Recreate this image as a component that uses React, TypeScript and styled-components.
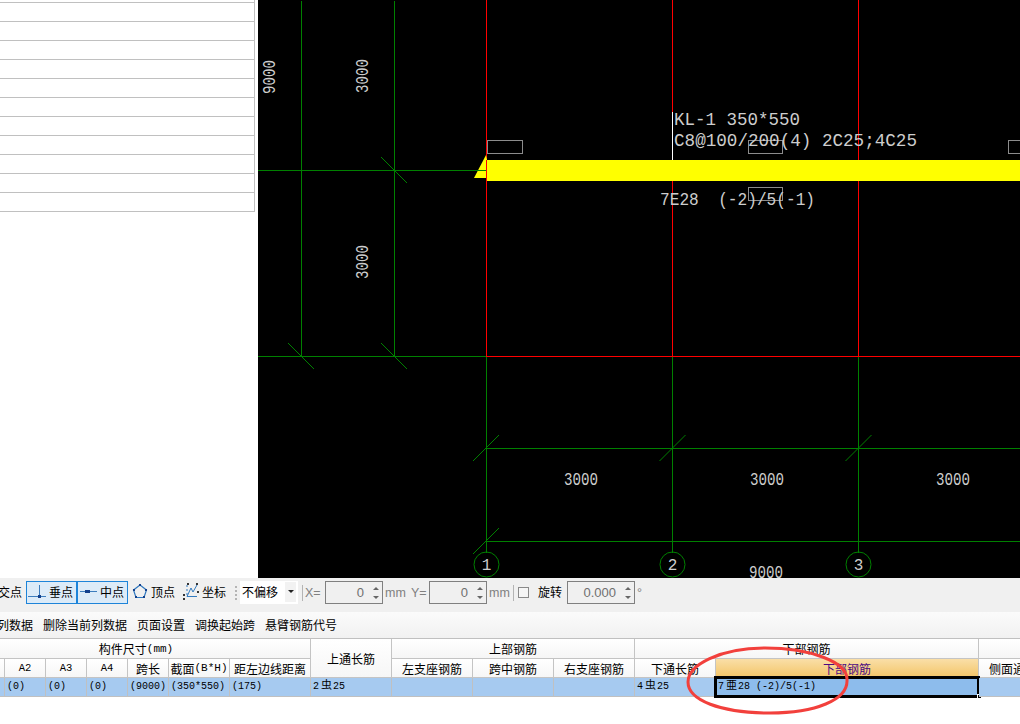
import styled, { createGlobalStyle } from 'styled-components';

const GlobalStyle = createGlobalStyle`
  html, body {
    margin: 0;
    background: #fff;
  }
  body {
    font-family: "Noto Sans CJK SC", "Liberation Sans", sans-serif;
    font-size: 12px;
    color: #000;
  }
`;

const Screen = styled.div`
  position: relative;
  width: 1020px;
  height: 724px;
  overflow: hidden;
  display: flex;
  flex-direction: column;
  background: #fff;
`;

const Workspace = styled.div`
  display: flex;
  height: 578px;
  flex: none;
`;

const SidePanel = styled.div`
  width: 258px;
  flex: none;
  overflow: hidden;
  background: #fff;
`;

const SideList = styled.div`
  width: 255px;
  margin-top: -16px;
  border-right: 1px solid #c0c0c0;
  box-sizing: border-box;
`;

const SideRow = styled.div`
  height: 19px;
  box-sizing: border-box;
  border-bottom: 1px solid #c0c0c0;
`;

const Canvas = styled.svg`
  display: block;
  width: 762px;
  height: 578px;
  flex: none;
  background: #000;
`;

const CadText = styled.text`
  fill: #cdcdcd;
  font-family: "Liberation Mono", monospace;
  font-size: 18px;
  white-space: pre;
`;

const Toolbar = styled.div`
  height: 34px;
  flex: none;
  box-sizing: border-box;
  padding-top: 3px;
  display: flex;
  align-items: flex-start;
  background: #f0f0f0;
  white-space: nowrap;
`;

const ToolLabel = styled.span<{ $left?: number }>`
  margin-left: ${(p) => p.$left ?? 0}px;
  height: 23px;
  line-height: 21px;
  flex: none;
`;

const ToolItem = styled.div<{ $left: number; $width: number; $gap: number; $active?: boolean }>`
  margin-left: ${(p) => p.$left}px;
  width: ${(p) => p.$width}px;
  height: 23px;
  flex: none;
  box-sizing: border-box;
  padding-bottom: 2px;
  display: flex;
  align-items: center;
  gap: ${(p) => p.$gap}px;
  border: ${(p) => (p.$active ? '1px solid #1d84d9' : 'none')};
  background: ${(p) => (p.$active ? '#dcebf8' : 'transparent')};
`;

const Grip = styled.div`
  margin: 5px 0 0 9px;
  width: 2px;
  height: 15px;
  flex: none;
  background: repeating-linear-gradient(to bottom, #b4b4b4 0 2px, transparent 2px 4px);
`;

const OffsetSelect = styled.div`
  margin-left: 3px;
  width: 58px;
  height: 23px;
  flex: none;
  display: flex;
  align-items: center;
  justify-content: space-between;
  box-sizing: border-box;
  padding: 0 0 2px 2px;
  background: #fff;
  line-height: 20px;
`;

const SelectArrow = styled.div`
  width: 11px;
  height: 20px;
  margin-right: 2px;
  display: flex;
  align-items: center;
  justify-content: center;
  background: #f2f2f2;
  &::before {
    content: '';
    border-top: 3px solid #222;
    border-left: 3px solid transparent;
    border-right: 3px solid transparent;
  }
`;

const Divider = styled.div<{ $left: number }>`
  margin: 4px 0 0 ${(p) => p.$left}px;
  width: 1px;
  height: 16px;
  flex: none;
  background: #b4b4b4;
`;

const Unit = styled.span<{ $left: number; $width: number }>`
  margin-left: ${(p) => p.$left}px;
  width: ${(p) => p.$width}px;
  flex: none;
  height: 23px;
  line-height: 25px;
  color: #808080;
  font-family: "Liberation Sans", sans-serif;
  font-size: 12.5px;
`;

const SpinBox = styled.div<{ $left: number; $width: number }>`
  margin-left: ${(p) => p.$left}px;
  width: ${(p) => p.$width}px;
  height: 23px;
  flex: none;
  box-sizing: border-box;
  border: 1px solid #808080;
  display: flex;
  align-items: center;
  justify-content: flex-end;
  color: #6f6f6f;
  font-family: "Liberation Sans", sans-serif;
  font-size: 13px;
`;

const SpinArrows = styled.div`
  width: 13px;
  margin-left: 5px;
  display: flex;
  flex-direction: column;
  align-items: center;
  gap: 6px;
`;

const SpinArrow = styled.div<{ $down?: boolean }>`
  border-left: 3px solid transparent;
  border-right: 3px solid transparent;
  border-top: ${(p) => (p.$down ? '3px solid #666' : 'none')};
  border-bottom: ${(p) => (p.$down ? 'none' : '3px solid #666')};
`;

const CheckBox = styled.div`
  margin: 6px 0 0 4px;
  width: 11px;
  height: 11px;
  flex: none;
  box-sizing: border-box;
  border: 1px solid #8a8a8a;
  background: #f6f6f6;
`;

const ActionBar = styled.div`
  height: 26px;
  flex: none;
  box-sizing: border-box;
  margin-left: -3px;
  padding-bottom: 2px;
  display: flex;
  align-items: center;
  gap: 10px;
  background: linear-gradient(to bottom, #fbfbfb, #f1f1f1);
  white-space: nowrap;
`;

const Table = styled.div`
  flex: none;
  width: 1061px;
  display: grid;
  grid-template-columns: 5px 41px 41px 41px 41px 61px 81px 81px 81px 81px 81px 81px 263px 82px;
  grid-template-rows: 20px 19px 19px;
  border-top: 1px solid #c0c0c0;
`;

const HeadCell = styled.div<{
  $col: string;
  $row: string;
  $shift?: number;
  $selected?: boolean;
  $start?: boolean;
}>`
  grid-column: ${(p) => p.$col};
  grid-row: ${(p) => p.$row};
  box-sizing: border-box;
  overflow: hidden;
  white-space: nowrap;
  display: flex;
  align-items: center;
  justify-content: ${(p) => (p.$start ? 'flex-start' : 'center')};
  padding-left: ${(p) => (p.$start ? 10 : 0)}px;
  padding-right: ${(p) => p.$shift ?? 0}px;
  border-right: 1px solid #c4c4c4;
  border-bottom: 1px solid #c4c4c4;
  color: ${(p) => (p.$selected ? '#4b0a82' : '#000')};
  background: ${(p) =>
    p.$selected ? 'linear-gradient(to bottom, #fadfa8, #f3c568)' : 'linear-gradient(to bottom, #fff, #f6f6f6)'};
`;

const Latin = styled.span<{ $code?: boolean }>`
  font-family: "Liberation Mono", monospace;
  font-size: ${(p) => (p.$code ? 10.5 : 11)}px;
`;

const DataCell = styled.div<{ $selected?: boolean }>`
  position: relative;
  grid-row: 3;
  box-sizing: border-box;
  padding-left: 2px;
  line-height: 17px;
  white-space: pre;
  font-family: "Liberation Mono", "Noto Sans CJK SC", monospace;
  font-size: 10px;
  border-right: 1px solid #c0c0c0;
  border-bottom: 1px solid #c0c0c0;
  background: ${(p) => (p.$selected ? '#8dbcec' : '#a6caf0')};

  ${(p) =>
    p.$selected &&
    `
    &::before {
      content: '';
      position: absolute;
      left: -2px;
      right: -2px;
      top: -2px;
      bottom: -2px;
      border: 3px solid #000;
    }
    &::after {
      content: '';
      position: absolute;
      right: -4px;
      bottom: -3px;
      width: 5px;
      height: 5px;
      background: #000;
      border: 1px solid #fff;
      box-sizing: border-box;
    }
  `}
`;

const RebarMark = styled.span`
  margin: 0 1px 0 2px;
  font-family: "Noto Sans CJK SC", sans-serif;
  font-size: 11px;
  line-height: 1;
`;

const Annotation = styled.svg`
  position: absolute;
  left: 0;
  top: 0;
  width: 1020px;
  height: 724px;
  pointer-events: none;
`;

const GREEN = '#008000';
const RED = '#ff0000';

const sideRows = Array.from({ length: 12 }, (_, i) => i);

const greenLines = [
  [301, 0, 301, 356],
  [394, 0, 394, 356],
  [258, 170, 486, 170],
  [258, 356, 486, 356],
  [486, 356, 486, 552],
  [672.5, 356, 672.5, 552],
  [858.5, 356, 858.5, 552],
  [486, 577, 486, 578],
  [672.5, 577, 672.5, 578],
  [858.5, 577, 858.5, 578],
  [486, 448, 1020, 448],
  [486, 541, 1020, 541],
];

const slashes = [
  [486, 448],
  [672.5, 448],
  [858.5, 448],
  [486, 541],
];

const backslashes = [
  [394, 170],
  [301, 356],
  [394, 356],
];

const spanText = [
  { x: 564, y: 485, label: '3000' },
  { x: 750, y: 485, label: '3000' },
  { x: 936, y: 485, label: '3000' },
];

const rotatedText = [
  { x: 276, y: 94, label: '9000' },
  { x: 369, y: 93, label: '3000' },
  { x: 369, y: 279, label: '3000' },
];

const axes = [
  { x: 486.5, label: '1' },
  { x: 672.5, label: '2' },
  { x: 858.5, label: '3' },
];

const detailBoxes = [
  [487.5, 140.5, 35, 13],
  [748.5, 140.5, 34, 13],
  [1008.5, 140.5, 30, 13],
  [748.5, 187.5, 34, 13],
];

function Drawing() {
  return (
    <Canvas viewBox="258 0 762 578">
      <g shapeRendering="crispEdges" strokeWidth={1} stroke={GREEN}>
        {greenLines.map(([x1, y1, x2, y2]) => (
          <line key={`${x1}-${y1}-${x2}`} x1={x1} y1={y1 + 0.5} x2={x2} y2={y2 + 0.5} />
        ))}
      </g>
      <g strokeWidth={1} stroke={GREEN}>
        {slashes.map(([x, y]) => (
          <line key={`${x}-${y}`} x1={x - 13} y1={y + 13} x2={x + 13} y2={y - 13} />
        ))}
        {backslashes.map(([x, y]) => (
          <line key={`${x}-${y}`} x1={x - 13} y1={y - 13} x2={x + 13} y2={y + 13} />
        ))}
      </g>
      <g shapeRendering="crispEdges" stroke={RED} strokeWidth={1}>
        <line x1={486.5} y1={0} x2={486.5} y2={356} />
        <line x1={672.5} y1={0} x2={672.5} y2={356} />
        <line x1={858.5} y1={0} x2={858.5} y2={356} />
        <line x1={486} y1={356.5} x2={1020} y2={356.5} />
      </g>
      <line x1={672.5} y1={112} x2={672.5} y2={160} stroke="#fff" shapeRendering="crispEdges" />

      <polygon points="486,155 487,160 487,178 474,178" fill="#ffff00" />
      <line x1={474} y1={170.5} x2={486} y2={170.5} stroke={GREEN} shapeRendering="crispEdges" />
      <rect x={487} y={160} width={533} height={21} fill="#ffff00" />
      <line x1={486.5} y1={160} x2={486.5} y2={181} stroke={RED} shapeRendering="crispEdges" />

      <g fill="none" stroke="#8c8c8c" shapeRendering="crispEdges">
        {detailBoxes.map(([x, y, w, h]) => (
          <rect key={`${x}-${y}`} x={x} y={y} width={w} height={h} />
        ))}
      </g>

      <CadText x={674} y={125} textLength={126} lengthAdjust="spacingAndGlyphs">
        KL-1 350*550
      </CadText>
      <CadText x={674} y={146} textLength={243} lengthAdjust="spacingAndGlyphs">
        C8@100/200(4) 2C25;4C25
      </CadText>
      <CadText x={660} y={205} textLength={155} lengthAdjust="spacingAndGlyphs">
        7E28  (-2)/5(-1)
      </CadText>

      {spanText.map((t) => (
        <CadText key={t.x} x={t.x} y={t.y} textLength={34} lengthAdjust="spacingAndGlyphs">
          {t.label}
        </CadText>
      ))}
      {rotatedText.map((t) => (
        <CadText
          key={`${t.x}-${t.y}`}
          x={t.x - 1}
          y={t.y}
          transform={`rotate(-90 ${t.x - 1} ${t.y})`}
          textLength={34}
          lengthAdjust="spacingAndGlyphs"
        >
          {t.label}
        </CadText>
      ))}
      <CadText x={749} y={578} textLength={34} lengthAdjust="spacingAndGlyphs">
        9000
      </CadText>

      {axes.map((a) => (
        <g key={a.label}>
          <circle cx={a.x} cy={564.5} r={12.5} fill="none" stroke={GREEN} />
          <CadText x={a.x} y={570} textAnchor="middle" style={{ fontSize: 16 }}>
            {a.label}
          </CadText>
        </g>
      ))}
    </Canvas>
  );
}

function FootIcon() {
  return (
    <svg width="20" height="17" viewBox="0 0 20 17">
      <path d="M1 13.5H19M12.5 2V13" stroke="#3d7dbd" strokeWidth="1" fill="none" />
      <rect x="11" y="12" width="3" height="3" fill="#14408c" />
    </svg>
  );
}

function MidIcon() {
  return (
    <svg width="20" height="17" viewBox="0 0 20 17">
      <path d="M2 8.5H19" stroke="#3d7dbd" strokeWidth="1" fill="none" />
      <rect x="7" y="7" width="5" height="3" fill="#14408c" />
    </svg>
  );
}

function VertexIcon() {
  return (
    <svg width="16" height="17" viewBox="0 0 16 17">
      <path d="M8 2L14.5 7L12 14.5H4L1.5 7Z" stroke="#2f78bf" strokeWidth="1.2" fill="none" />
      <g fill="#14408c">
        <rect x="7" y="1" width="2" height="2" />
        <rect x="1" y="6" width="2" height="2" />
        <rect x="13" y="6" width="2" height="2" />
        <rect x="3" y="13" width="2" height="2" />
        <rect x="11" y="13" width="2" height="2" />
      </g>
    </svg>
  );
}

function CoordIcon() {
  return (
    <svg width="18" height="19" viewBox="0 0 18 19">
      <path d="M5 14.5H15M5 14.5L9 6L11 10L15 3" stroke="#2f78bf" strokeWidth="1" fill="none" />
      <path d="M5 3V14" stroke="#2f78bf" strokeWidth="1" strokeDasharray="2 2" fill="none" />
      <g fill="#333">
        <rect x="1" y="12" width="2" height="2" />
        <rect x="1" y="16" width="2" height="2" />
        <rect x="5" y="1" width="2" height="2" />
        <rect x="14" y="1" width="2" height="2" />
        <rect x="15" y="9" width="2" height="2" />
      </g>
    </svg>
  );
}

function Spin({ left, width, value }: { left: number; width: number; value: string }) {
  return (
    <SpinBox $left={left} $width={width}>
      {value}
      <SpinArrows>
        <SpinArrow />
        <SpinArrow $down />
      </SpinArrows>
    </SpinBox>
  );
}

export default function App() {
  return (
    <Screen>
      <GlobalStyle />
      <Workspace>
        <SidePanel>
          <SideList>
            {sideRows.map((r) => (
              <SideRow key={r} />
            ))}
          </SideList>
        </SidePanel>
        <Drawing />
      </Workspace>

      <Toolbar>
        <ToolLabel $left={-2}>交点</ToolLabel>
        <ToolItem $left={4} $width={51} $gap={2} $active>
          <FootIcon />
          垂点
        </ToolItem>
        <ToolItem $left={0} $width={51} $gap={2} $active>
          <MidIcon />
          中点
        </ToolItem>
        <ToolItem $left={4} $width={43} $gap={3}>
          <VertexIcon />
          顶点
        </ToolItem>
        <ToolItem $left={7} $width={44} $gap={2}>
          <CoordIcon />
          坐标
        </ToolItem>
        <Grip />
        <OffsetSelect>
          不偏移
          <SelectArrow />
        </OffsetSelect>
        <Divider $left={4} />
        <Unit $left={2} $width={17}>X=</Unit>
        <Spin left={3} width={58} value="0" />
        <Unit $left={2} $width={22}>mm</Unit>
        <Unit $left={4} $width={16}>Y=</Unit>
        <Spin left={2} width={58} value="0" />
        <Unit $left={2} $width={22}>mm</Unit>
        <Divider $left={2} />
        <CheckBox />
        <ToolLabel $left={9}>旋转</ToolLabel>
        <Spin left={5} width={68} value="0.000" />
        <Unit $left={2} $width={8}>°</Unit>
      </Toolbar>

      <ActionBar>
        <span>列数据</span>
        <span>删除当前列数据</span>
        <span>页面设置</span>
        <span>调换起始跨</span>
        <span>悬臂钢筋代号</span>
      </ActionBar>

      <Table>
        <HeadCell $col="1 / 8" $row="1" $shift={38}>
          构件尺寸<Latin>(mm)</Latin>
        </HeadCell>
        <HeadCell $col="8" $row="1 / 3">上通长筋</HeadCell>
        <HeadCell $col="9 / 12" $row="1">上部钢筋</HeadCell>
        <HeadCell $col="12 / 14" $row="1">下部钢筋</HeadCell>
        <HeadCell $col="14" $row="1" />

        <HeadCell $col="1" $row="2" />
        <HeadCell $col="2" $row="2"><Latin $code>A2</Latin></HeadCell>
        <HeadCell $col="3" $row="2"><Latin $code>A3</Latin></HeadCell>
        <HeadCell $col="4" $row="2"><Latin $code>A4</Latin></HeadCell>
        <HeadCell $col="5" $row="2">跨长</HeadCell>
        <HeadCell $col="6" $row="2">截面<Latin>(B*H)</Latin></HeadCell>
        <HeadCell $col="7" $row="2">距左边线距离</HeadCell>
        <HeadCell $col="9" $row="2">左支座钢筋</HeadCell>
        <HeadCell $col="10" $row="2">跨中钢筋</HeadCell>
        <HeadCell $col="11" $row="2">右支座钢筋</HeadCell>
        <HeadCell $col="12" $row="2">下通长筋</HeadCell>
        <HeadCell $col="13" $row="2" $selected>下部钢筋</HeadCell>
        <HeadCell $col="14" $row="2" $start>侧面通长筋</HeadCell>

        <DataCell />
        <DataCell>(0)</DataCell>
        <DataCell>(0)</DataCell>
        <DataCell>(0)</DataCell>
        <DataCell>(9000)</DataCell>
        <DataCell>(350*550)</DataCell>
        <DataCell>(175)</DataCell>
        <DataCell>2<RebarMark>虫</RebarMark>25</DataCell>
        <DataCell />
        <DataCell />
        <DataCell />
        <DataCell>4<RebarMark>虫</RebarMark>25</DataCell>
        <DataCell $selected>7<RebarMark>亜</RebarMark>28 (-2)/5(-1)</DataCell>
        <DataCell />
      </Table>

      <Annotation viewBox="0 0 1020 724">
        <path
          d="M847 680C848 662 810 648 765 648C720 648 688 665 688 682C688 700 720 713 770 713C815 713 848 700 847 680Z"
          fill="none"
          stroke="#f2403c"
          strokeWidth="3"
        />
      </Annotation>
    </Screen>
  );
}
